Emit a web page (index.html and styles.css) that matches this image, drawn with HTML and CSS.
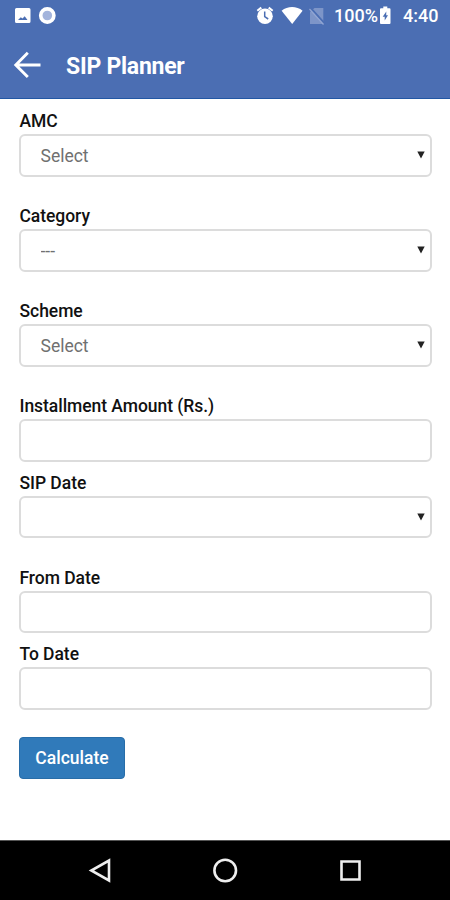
FILE: index.html
```html
<!DOCTYPE html>
<html lang="en">
<head>
<meta charset="utf-8">
<title>SIP Planner</title>
<link rel="stylesheet" href="styles.css">
</head>
<body>
<div class="screen">
  <header class="header">
    <div class="status">
      <svg class="status-left" width="60" height="32" viewBox="0 0 60 32">
        <path fill="#fff" fill-rule="evenodd" d="M16.500 8h12.500a1.500 1.500 0 0 1 1.500 1.500v12a1.500 1.500 0 0 1-1.500 1.500h-12.500a1.500 1.500 0 0 1-1.500-1.500v-12a1.500 1.500 0 0 1 1.500-1.500zM18 20h9.500l-2.800-3.800-2.200 2.200-1.700-1.200z"/>
        <circle cx="47.300" cy="15.500" r="6.600" fill="#a3b4dc" stroke="#fff" stroke-width="3.600"/>
      </svg>
      <svg class="status-icons" width="75" height="32" viewBox="0 0 75 32">
        <g fill="none" stroke="#fff">
          <path stroke-width="2" d="M2.300 10.800l4-3.200M13.700 7.600l4 3.200"/>
          <circle cx="10" cy="16.300" r="7.800" fill="#fff" stroke="none"/>
          <path stroke="#4b6eb3" stroke-width="1.500" d="M9.700 11.500v5.200l3.500 2.300"/>
        </g>
        <path fill="#fff" d="M26.600 10.700c6-4.800 15-4.800 21 0L37.200 24z"/>
        <path fill="#7d95c8" d="M59.500 8H68.300v16H55v-12z"/>
        <path stroke="#4b6eb3" stroke-width="2" d="M56 8.500l14 15.500"/>
        <path stroke="#92a6d3" stroke-width="1.200" d="M54.500 9l14 15.500"/>
      </svg>
      <span class="percent">100%</span>
      <svg class="battery" width="13" height="32" viewBox="0 0 13 32">
        <path fill="#fff" d="M4.300 6.500h4v1.800h2.200a1 1 0 0 1 1 1V23a1 1 0 0 1-1 1H2a1 1 0 0 1-1-1V9.300a1 1 0 0 1 1-1h2.300z"/>
        <path fill="#4b6eb3" d="M7.300 11.500L3.700 16.700h2V20.500L9 15.300H7.200z"/>
      </svg>
      <span class="clock">4:40</span>
    </div>
    <div class="appbar">
      <svg class="back" width="28" height="28" viewBox="0 0 28 28"><path fill="none" stroke="#fff" stroke-width="2.900" d="M27.500 14H3M14.800 1.800L2.800 14l12 12"/></svg>
      <h1 class="title">SIP Planner</h1>
    </div>
  </header>
  <main class="form">
    <div class="field"><label class="label" for="amc">AMC</label><div class="control"><select class="box" id="amc"><option>Select</option></select><svg class="arrow" width="8" height="8" viewBox="0 0 8 8"><path d="M.3.500h7.400L4 7.500z"/></svg></div></div>
    <div class="field"><label class="label" for="category">Category</label><div class="control"><select class="box" id="category"><option>---</option></select><svg class="arrow" width="8" height="8" viewBox="0 0 8 8"><path d="M.3.500h7.400L4 7.500z"/></svg></div></div>
    <div class="field"><label class="label" for="scheme">Scheme</label><div class="control"><select class="box" id="scheme"><option>Select</option></select><svg class="arrow" width="8" height="8" viewBox="0 0 8 8"><path d="M.3.500h7.400L4 7.500z"/></svg></div></div>
    <div class="field tight"><label class="label" for="amount">Installment Amount (Rs.)</label><div class="control"><input class="box" id="amount"></div></div>
    <div class="field"><label class="label" for="sipdate">SIP Date</label><div class="control"><select class="box" id="sipdate"><option></option></select><svg class="arrow" width="8" height="8" viewBox="0 0 8 8"><path d="M.3.500h7.400L4 7.500z"/></svg></div></div>
    <div class="field tight"><label class="label" for="from">From Date</label><div class="control"><input class="box" id="from"></div></div>
    <div class="field last"><label class="label" for="to">To Date</label><div class="control"><input class="box" id="to"></div></div>
    <button class="calculate">Calculate</button>
  </main>
  <nav class="navbar">
    <svg width="26" height="26" viewBox="0 0 26 26"><path d="M22 2.500v20L4.300 12.500z"/></svg>
    <svg width="26" height="26" viewBox="0 0 26 26"><circle cx="13.200" cy="12.500" r="10.800"/></svg>
    <svg width="26" height="26" viewBox="0 0 26 26"><path d="M4.500 3.500h18v18h-18z"/></svg>
  </nav>
</div>
</body>
</html>
```

FILE: styles.css
```css
* { box-sizing: border-box; }
body { margin: 0; font-family: Roboto, "Liberation Sans", sans-serif; background: #fff; }
.screen { width: 450px; height: 900px; display: flex; flex-direction: column; }
.header { height: 99px; background: #4b6eb3; border-bottom: 1px solid #2257a4; color: #fff; }
.status { height: 32px; display: flex; align-items: center; font-size: 18px; font-weight: 500; line-height: 32px; }
.status-icons { margin-left: 195px; }
.percent { margin-left: 4px; width: 45px; white-space: nowrap; }
.battery { flex: none; }
.clock { margin-left: 11px; }
.appbar { display: flex; align-items: center; height: 67px; padding-left: 13px; gap: 25px; }
.back { margin-top: -2px; }
.title { margin: 0; padding-top: 2px; font-size: 23px; letter-spacing: -.25px; font-weight: 700; line-height: 28px; white-space: nowrap; }
.form { flex: 1; padding: 10px 18px 0 19px; }
.field { margin-bottom: 27px; }
.tight { margin-bottom: 8.500px; }
.last { margin-bottom: 27px; }
.label { display: block; height: 25px; padding-left: .5px; line-height: 24px; font-size: 17.500px; letter-spacing: -.05px; font-weight: 500; color: #111; white-space: nowrap; }
.control { position: relative; height: 43px; }
.box { display: block; width: 100%; height: 42.500px; margin: 0; padding: 1px 20px 0 19.500px; border: 2px solid #dcdcdc; border-radius: 6px; background: #fff; appearance: none; font: 400 17.500px/24px Roboto, "Liberation Sans", sans-serif; color: #707070; }
.arrow { position: absolute; right: 7px; top: 17px; fill: #222; }
.calculate { display: block; width: 106px; height: 42px; padding: 0; border: 1px solid #286da8; border-radius: 4px; background: #307aba; color: #fff; font: 500 17.500px Roboto, "Liberation Sans", sans-serif; }
.navbar { height: 60px; background: #000; border-top: 1px solid #555; display: flex; justify-content: center; align-items: center; gap: 99px; }
.navbar svg { fill: none; stroke: #eee; stroke-width: 2.600; }
```
